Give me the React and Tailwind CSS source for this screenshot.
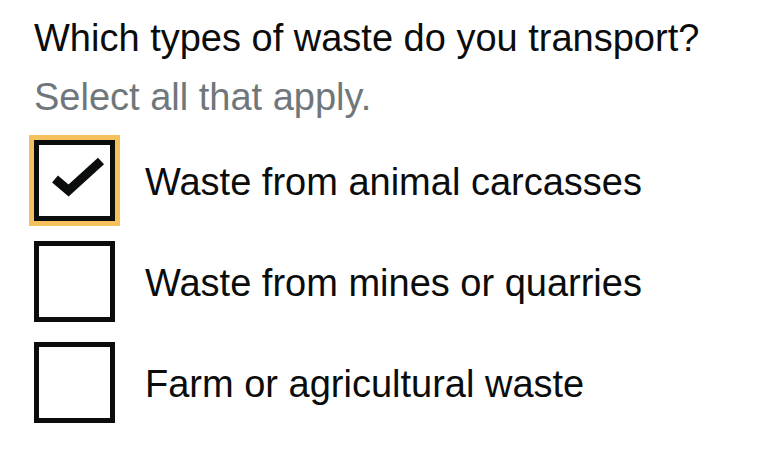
const options = [
  { label: 'Waste from animal carcasses', checked: true },
  { label: 'Waste from mines or quarries', checked: false },
  { label: 'Farm or agricultural waste', checked: false },
];

function Checkbox({ label, checked }) {
  return (
    <div className="flex items-center">
      <div
        className={
          'relative w-[81px] h-[81px] shrink-0 border-[5px] border-[#0b0c0c] bg-white ' +
          (checked ? 'shadow-[0_0_0_5px_#f6c05c]' : '')
        }
      >
        {checked && (
          <svg className="absolute -left-[5px] -top-[5px]" width="81" height="81" viewBox="0 0 81 81">
            <polyline
              points="21,39 34.5,50.5 67,21"
              fill="none"
              stroke="#0b0c0c"
              strokeWidth="9"
              strokeLinejoin="miter"
            />
          </svg>
        )}
      </div>
      <span className="ml-[30px] pt-[4px] text-[38px] leading-[45px] text-[#0b0c0c]">{label}</span>
    </div>
  );
}

export default function App() {
  return (
    <div className="w-[760px] h-[452px] bg-white pl-[34px] pt-[16px] font-['Liberation_Sans',Arial,sans-serif]">
      <h1 className="text-[38px] leading-[45px] text-[#0b0c0c]">Which types of waste do you transport?</h1>
      <p className="mt-[14px] text-[38px] leading-[45px] text-[#6f777b]">Select all that apply.</p>
      <div className="mt-[20px] flex flex-col gap-[20px]">
        {options.map((o) => (
          <Checkbox key={o.label} {...o} />
        ))}
      </div>
    </div>
  );
}
